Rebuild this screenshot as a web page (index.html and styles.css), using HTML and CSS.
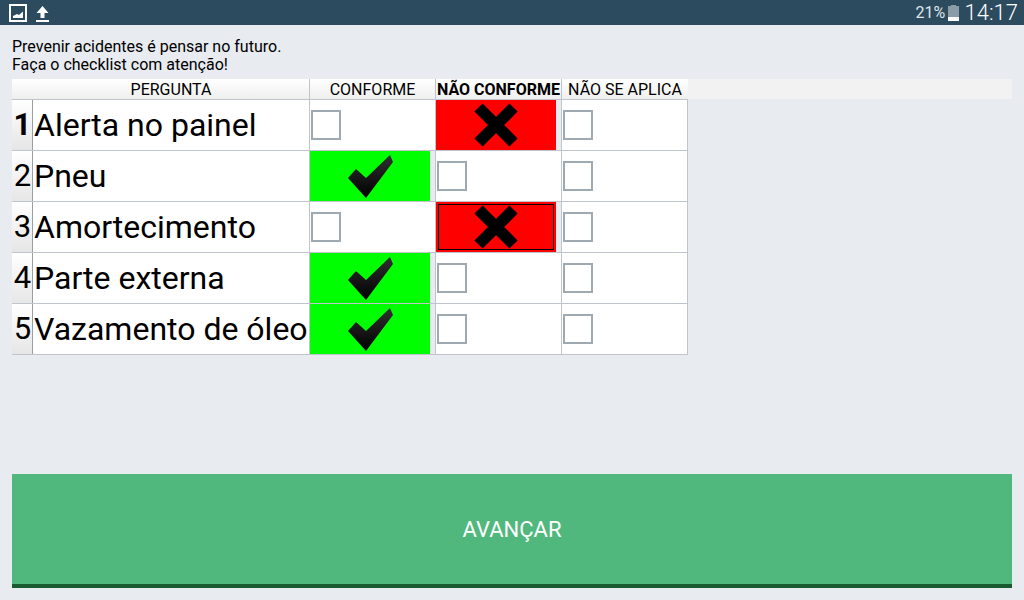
FILE: index.html
```html
<!DOCTYPE html>
<html lang="pt">
<head>
    <meta charset="UTF-8">
    <meta name="viewport" content="width=device-width, initial-scale=1.0">
    <title>Checklist</title>
    <link rel="stylesheet" href="styles.css">
</head>
<body>
    <svg class="defs" width="0" height="0">
        <defs>
            <linearGradient id="checkfill" x1="0" y1="0" x2="0" y2="1">
                <stop offset="0" stop-color="#303030"/>
                <stop offset="1" stop-color="#000000"/>
            </linearGradient>
            <symbol id="check" viewBox="0 0 45 43">
                <path fill="url(#checkfill)" d="M0 23L8 14L18 23L42 0L45 7L18 43Z"/>
            </symbol>
            <symbol id="cross" viewBox="0 0 44 44">
                <path stroke="#000" stroke-width="11.5" d="M4.5 4.5L39.5 39.5M39.5 4.5L4.5 39.5"/>
            </symbol>
        </defs>
    </svg>

    <header class="statusbar">
        <div class="status_left">
            <svg class="icon_pic" width="18" height="18" viewBox="0 0 18 18">
                <path fill="none" stroke="#fff" stroke-width="2" d="M1 1H17V17H1Z"/>
                <path fill="#fff" d="M4 14V12L8 10L10 11L14 7.5V14Z"/>
            </svg>
            <svg class="icon_up" width="13" height="16" viewBox="0 0 13 16">
                <path fill="#fff" d="M6.5 0L12.5 7H8.5V12H4.5V7H0.5ZM0 14H13V16H0Z"/>
            </svg>
        </div>
        <div class="status_right">
            <span class="battery_text">21%</span>
            <span class="battery"><span class="battery_level"></span></span>
            <span class="clock">14:17</span>
        </div>
    </header>

    <div class="container">
        <p class="intro">Prevenir acidentes é pensar no futuro.<br>Faça o checklist com atenção!</p>

        <div class="row row_head">
            <div class="head_question">PERGUNTA</div>
            <div class="head_col">CONFORME</div>
            <div class="head_col head_active">NÃO CONFORME</div>
            <div class="head_col head_last">NÃO SE APLICA</div>
            <div class="head_rest"></div>
        </div>

        <div class="row">
            <div class="num num_active">1</div>
            <div class="question">Alerta no painel</div>
            <div class="col"><span class="box"></span></div>
            <div class="col"><span class="mark mark_no"><svg width="44" height="44"><use href="#cross"/></svg></span></div>
            <div class="col"><span class="box"></span></div>
        </div>
        <div class="row">
            <div class="num">2</div>
            <div class="question">Pneu</div>
            <div class="col"><span class="mark mark_yes"><svg width="45" height="43"><use href="#check"/></svg></span></div>
            <div class="col"><span class="box"></span></div>
            <div class="col"><span class="box"></span></div>
        </div>
        <div class="row">
            <div class="num">3</div>
            <div class="question">Amortecimento</div>
            <div class="col"><span class="box"></span></div>
            <div class="col"><span class="mark mark_no mark_focus"><svg width="44" height="44"><use href="#cross"/></svg></span></div>
            <div class="col"><span class="box"></span></div>
        </div>
        <div class="row">
            <div class="num">4</div>
            <div class="question">Parte externa</div>
            <div class="col"><span class="mark mark_yes"><svg width="45" height="43"><use href="#check"/></svg></span></div>
            <div class="col"><span class="box"></span></div>
            <div class="col"><span class="box"></span></div>
        </div>
        <div class="row">
            <div class="num">5</div>
            <div class="question">Vazamento de óleo</div>
            <div class="col"><span class="mark mark_yes"><svg width="45" height="43"><use href="#check"/></svg></span></div>
            <div class="col"><span class="box"></span></div>
            <div class="col"><span class="box"></span></div>
        </div>

        <button class="next_button" type="button">AVANÇAR</button>
    </div>
</body>
</html>
```

FILE: styles.css
```css
body {
    font-family: Roboto, sans-serif;
    margin: 0;
    padding: 0;
    height: 600px;
    overflow: hidden;
    background-color: #e8ebf0;
    color: #000000;
}
.defs {
    display: block;
    height: 0;
}
.statusbar {
    display: flex;
    justify-content: space-between;
    align-items: center;
    height: 25px;
    background: #2d4b5f;
    color: #ffffff;
}
.status_left {
    display: flex;
    align-items: center;
    gap: 9px;
    padding-left: 9px;
}
.icon_up {
    margin-top: 3px;
}
.status_right {
    display: flex;
    align-items: center;
    padding-right: 6px;
}
.battery_text {
    font-size: 16px;
    color: #dfe5e9;
    width: 33px;
    box-sizing: border-box;
    padding-left: 1px;
}
.battery {
    position: relative;
    display: flex;
    align-items: flex-end;
    width: 11px;
    height: 15px;
    margin-top: 1px;
    background: #8a9ca8;
}
.battery::before {
    content: "";
    position: absolute;
    top: -1px;
    left: 3px;
    width: 5px;
    height: 1px;
    background: #8a9ca8;
}
.battery_level {
    display: block;
    width: 100%;
    height: 4px;
    background: #ffffff;
}
.clock {
    font-size: 22px;
    font-weight: 300;
    margin-left: 6px;
}
.container {
    padding: 0 12px;
}
.intro {
    margin: 0;
    padding-top: 13px;
    height: 41px;
    font-size: 16px;
    line-height: 18px;
}
.row {
    display: flex;
    height: 51px;
    box-sizing: border-box;
    width: 676px;
    border-bottom: 1px solid #c0c4cc;
}
.row_head {
    width: 1000px;
    height: 21px;
    font-size: 16px;
    text-align: center;
    line-height: 21px;
    border-bottom: none;
}
.head_question, .head_col, .head_rest {
    height: 21px;
    box-sizing: border-box;
    background: linear-gradient(#ffffff, #efefef);
    border-bottom: 1px solid #c0c4cc;
    white-space: nowrap;
}
.head_question {
    width: 298px;
    padding-left: 21px;
    border-right: 1px solid #c0c4cc;
}
.head_col {
    width: 126px;
    border-right: 1px solid #c0c4cc;
}
.head_active {
    font-weight: bold;
}
.head_last {
    border-right: none;
}
.head_rest {
    flex: 1;
    border-bottom: none;
    height: 20px;
    background: #f2f2f2;
}
.num {
    width: 21px;
    box-sizing: border-box;
    padding-left: 1px;
    border-right: 1px solid #9a9ea6;
    background: linear-gradient(#ffffff, #e6e6e6);
    font-size: 31px;
    line-height: 50px;
    text-align: center;
}
.num_active {
    font-weight: bold;
}
.question {
    width: 277px;
    box-sizing: border-box;
    padding-left: 1px;
    background: #ffffff;
    border-right: 1px solid #c0c4cc;
    font-size: 32px;
    line-height: 50px;
    white-space: nowrap;
}
.col {
    display: flex;
    align-items: center;
    width: 126px;
    box-sizing: border-box;
    background: #ffffff;
    border-right: 1px solid #c0c4cc;
}
.box {
    display: block;
    width: 30px;
    height: 30px;
    box-sizing: border-box;
    margin-left: 1px;
    background: #ffffff;
    border: 2px solid #9fa9b1;
}
.mark {
    display: flex;
    align-items: center;
    justify-content: center;
    width: 120px;
    height: 50px;
    box-sizing: border-box;
}
.col:has(.mark) {
    background: #e8ebf0;
}
.mark_yes {
    background: #00ff00;
}
.mark_no {
    background: #ff0000;
}
.mark_focus {
    outline: 1px solid #000000;
    outline-offset: -3px;
}
.next_button {
    display: block;
    width: 1000px;
    height: 114px;
    margin-top: 119px;
    padding: 0;
    border: none;
    border-bottom: 4px solid #1a5a30;
    background: #50b87c;
    color: #ffffff;
    font-family: Roboto, sans-serif;
    font-size: 22px;
}
```
